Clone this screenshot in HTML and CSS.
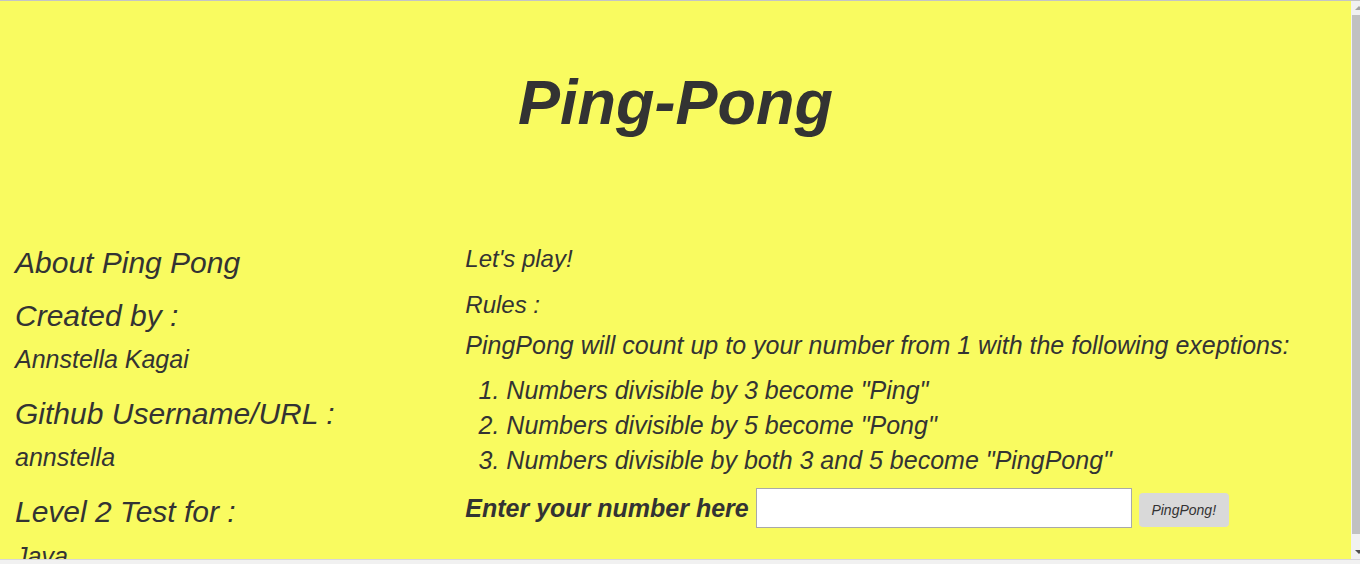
FILE: index.html
```html
<!DOCTYPE html>
<html lang="en">
<head>
<meta charset="utf-8">
<title>Ping-Pong</title>
<link rel="stylesheet" href="styles.css">
</head>
<body>
<div class="window">
  <div class="viewport">
    <div class="page">
      <h1 class="title">Ping-Pong</h1>
      <div class="row">
        <div class="col col-about">
          <h3 class="about">About Ping Pong</h3>
          <h3 class="label label-first">Created by :</h3>
          <p class="value">Annstella Kagai</p>
          <h3 class="label">Github Username/URL :</h3>
          <p class="value">annstella</p>
          <h3 class="label">Level 2 Test for :</h3>
          <p class="value">Java</p>
        </div>
        <div class="col col-game">
          <p class="play">Let's play!</p>
          <p class="rules">Rules :</p>
          <p class="intro">PingPong will count up to your number from 1 with the following exeptions:</p>
          <ol class="rule-list">
            <li>Numbers divisible by 3 become "Ping"</li>
            <li>Numbers divisible by 5 become "Pong"</li>
            <li>Numbers divisible by both 3 and 5 become "PingPong"</li>
          </ol>
          <form class="form" onsubmit="return false;">
            <label class="form-label" for="number">Enter your number here</label>
            <input class="form-input" id="number" type="text">
            <button class="form-btn" type="submit">PingPong!</button>
          </form>
        </div>
      </div>
    </div>
    <div class="scrollbar">
      <div class="sb-inner">
        <div class="sb-btn"><span class="tri-up"></span></div>
        <div class="sb-thumb"></div>
        <div class="sb-btn"><span class="tri-down"></span></div>
      </div>
    </div>
  </div>
  <div class="hstrip"></div>
</div>
</body>
</html>
```
FILE: styles.css
```css
* { box-sizing: border-box; }

html, body {
  margin: 0;
  padding: 0;
  overflow: hidden;
}

body {
  font-family: "Liberation Sans", Arial, sans-serif;
  color: #333333;
  background: #f1f1f1;
}

.window {
  height: 564px;
  border-top: 1px solid #c4c4c4;
  display: flex;
  flex-direction: column;
}

.viewport {
  height: 558px;
  display: flex;
}

.page {
  flex: 1;
  overflow: hidden;
  background: #f9fb60;
  padding-top: 66px;
  font-style: italic;
}

.title {
  margin: 0 0 107px;
  font-size: 63px;
  line-height: 71px;
  font-weight: bold;
  font-style: italic;
  text-align: center;
}

.row {
  display: grid;
  grid-template-columns: 1fr 2fr;
}

.col {
  padding: 0 15px;
}

.about,
.label {
  margin: 0;
  font-size: 30px;
  line-height: 36px;
  font-weight: normal;
}

.about { margin-bottom: 17px; }
.label { margin-bottom: 11.5px; }
.label-first { margin-bottom: 10.5px; }

.value {
  margin: 0 0 22px;
  font-size: 25px;
  line-height: 29px;
}

.play,
.rules {
  margin: 0;
  font-size: 24px;
  line-height: 28px;
}

.intro {
  margin: 0 0 14px;
  font-size: 25px;
  line-height: 28px;
}

.play { margin-bottom: 18px; }
.rules { margin-bottom: 12px; }

.rule-list {
  margin: 0 0 10px;
  padding-left: 41px;
  font-size: 25px;
  line-height: 35px;
}

.form {
  display: flex;
  align-items: flex-start;
}

.form-label {
  font-size: 25px;
  line-height: 29px;
  font-weight: bold;
  margin-top: 6px;
  margin-right: 7px;
}

.form-input {
  width: 376px;
  height: 40px;
  border: 1px solid #a9a9a9;
  background: #ffffff;
  margin: 0 7px 0 0;
  padding: 0 4px;
  font-size: 16px;
}

.form-btn {
  width: 90px;
  height: 34px;
  margin-top: 5px;
  border: none;
  border-radius: 4px;
  background: #d9d9d9;
  color: #333333;
  font-family: "Liberation Sans", Arial, sans-serif;
  font-style: italic;
  font-size: 14px;
  padding: 0;
}

.scrollbar {
  width: 9px;
  overflow: hidden;
  background: #f1f1f1;
}

.sb-inner {
  width: 15px;
  height: 100%;
  display: flex;
  flex-direction: column;
}

.sb-btn {
  height: 14px;
  display: flex;
  align-items: center;
  justify-content: center;
}

.sb-thumb {
  flex: 1;
  margin: 0 0 11px 1px;
  background: #c1c1c1;
}

.tri-up {
  width: 0;
  height: 0;
  border-left: 4px solid transparent;
  border-right: 4px solid transparent;
  border-bottom: 4px solid #a3a3a3;
}

.tri-down {
  width: 0;
  height: 0;
  border-left: 4px solid transparent;
  border-right: 4px solid transparent;
  border-top: 4px solid #505050;
}

.hstrip {
  flex: 1;
  border-top: 1px solid #d6d6dc;
  background: #f1f1f1;
}
```
